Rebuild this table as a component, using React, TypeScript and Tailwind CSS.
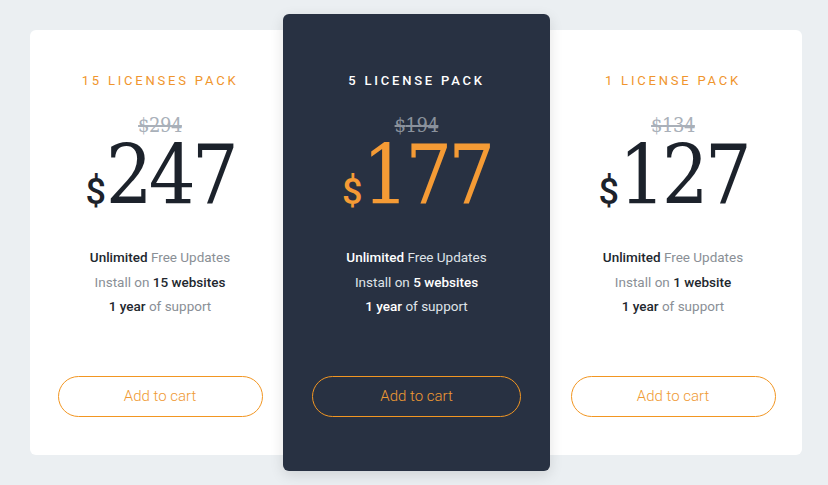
const plans = [
  { title: "15 LICENSES PACK", old: "294", price: "247", sites: "15 websites", featured: false },
  { title: "5 LICENSE PACK", old: "194", price: "177", sites: "5 websites", featured: true },
  { title: "1 LICENSE PACK", old: "134", price: "127", sites: "1 website", featured: false },
];

const slab = "font-['DejaVu_Serif_Condensed','DejaVu_Serif',serif]";

const Card = ({ plan, w }: { plan: (typeof plans)[number]; w?: string }) => {
  const f = plan.featured;
  return (
    <div
      className={
        f
          ? "relative z-10 w-[267px] h-[457px] rounded-md bg-[#283142] pt-[60px] shadow-[0_4px_14px_rgba(0,0,0,0.12)] flex flex-col items-center"
          : `${w} h-[425px] rounded-md bg-white pt-[44px] flex flex-col items-center`
      }
    >
      <div
        className={`text-[13px] leading-none tracking-[2.8px] ${f ? "text-white font-medium" : "text-[#f0952d] font-normal"}`}
      >
        {plan.title}
      </div>
      <div
        className={`${slab} mt-[28px] h-[20px] text-[20px] leading-none line-through tracking-[-0.5px] ${f ? "text-[#8a919c]" : "text-[#a9b0b9]"}`}
      >
        ${plan.old}
      </div>
      <div className={`flex items-baseline ${f ? "text-[#f59b35]" : "text-[#1c222b]"}`}>
        <span className="text-[36px] leading-none font-medium">$</span>
        <span className={`${slab} text-[82px] leading-none font-normal tracking-[-4px]`}>{plan.price}</span>
      </div>
      <div
        className={`mt-[28px] text-[13.5px] leading-[24.5px] text-center ${f ? "text-[#dfe3e8]" : "text-[#8a8f96]"}`}
      >
        <div>
          <span className={`font-medium ${f ? "text-white" : "text-[#22272e]"}`}>Unlimited</span> Free Updates
        </div>
        <div>
          Install on <span className={`font-medium ${f ? "text-white" : "text-[#22272e]"}`}>{plan.sites}</span>
        </div>
        <div>
          <span className={`font-medium ${f ? "text-white" : "text-[#22272e]"}`}>1 year</span> of support
        </div>
      </div>
      <button
        className={`mt-[57px] h-[41px] rounded-full border border-[#f29622] text-[15px] font-light text-[#ef9a33] ${f ? "w-[209px]" : "w-[205px]"}`}
      >
        Add to cart
      </button>
    </div>
  );
};

export default function App() {
  return (
    <div className="w-[828px] h-[485px] bg-[#ebeff2] font-['Roboto',sans-serif] flex items-start pt-[14px] pl-[30px]">
      <div className="mt-[16px]">
        <Card plan={plans[0]} w="w-[260px]" />
      </div>
      <div className="-ml-[7px]">
        <Card plan={plans[1]} />
      </div>
      <div className="mt-[16px] -ml-[6px]">
        <Card plan={plans[2]} w="w-[258px]" />
      </div>
    </div>
  );
}
